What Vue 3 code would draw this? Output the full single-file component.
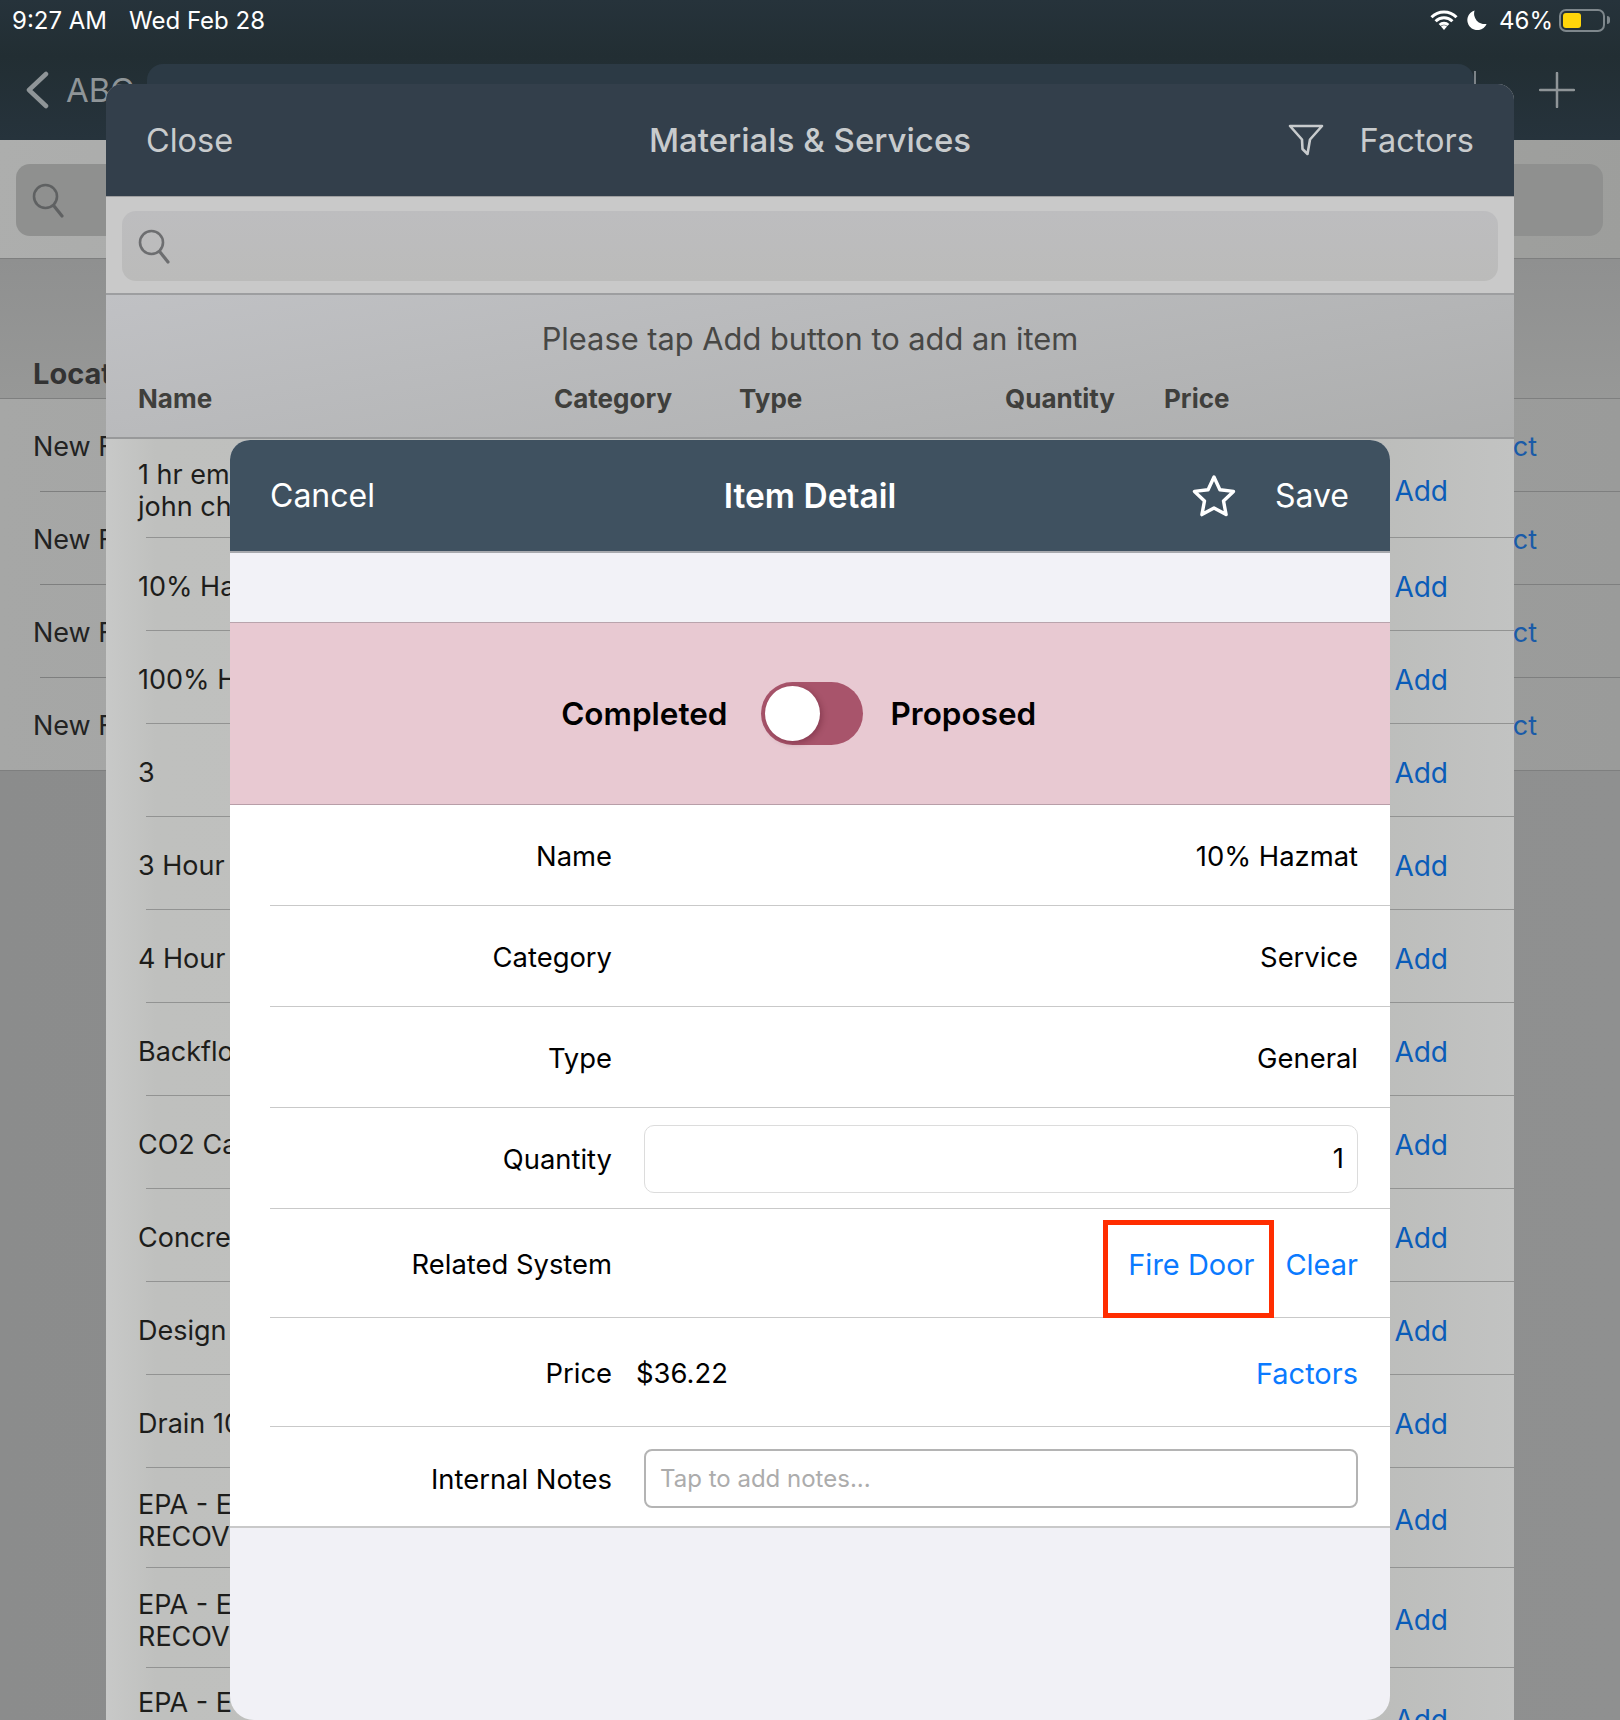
<script setup>
const backRows = [1, 2, 3, 4]
const items = [
  { lines: ['1 hr em', 'john ch'], cls: 'first' },
  { lines: ['10% Ha'] },
  { lines: ['100% H'] },
  { lines: ['3'] },
  { lines: ['3 Hour'] },
  { lines: ['4 Hour'] },
  { lines: ['Backflo'] },
  { lines: ['CO2 Ca'] },
  { lines: ['Concre'] },
  { lines: ['Design'] },
  { lines: ['Drain 10'] },
  { lines: ['EPA - E', 'RECOV'], cls: 'tall' },
  { lines: ['EPA - E', 'RECOV'], cls: 'tall' },
  { lines: ['EPA - E'], cls: 'last' }
]
const infoRows = [
  ['Name', '10% Hazmat'],
  ['Category', 'Service'],
  ['Type', 'General']
]
</script>

<template>
  <div class="screen">
    <!-- page behind the sheets -->
    <div class="base">
      <header class="base-head">
        <div class="status">
          <div class="status-left"><span>9:27 AM</span><span>Wed Feb 28</span></div>
          <div class="status-right">
            <svg class="wifi" viewBox="0 0 28 20" width="28" height="20">
              <path d="M1.5 7.2a17.6 17.6 0 0 1 25 0M5.6 11.2a11.8 11.8 0 0 1 16.8 0M9.7 15a6 6 0 0 1 8.6 0" fill="none" stroke="#fff" stroke-width="3" />
              <path d="M14 20l-3-3.4a4.2 4.2 0 0 1 6 0z" fill="#fff" />
            </svg>
            <svg class="moon" viewBox="0 0 20 20" width="20" height="20">
              <path d="M7.6.5a10 10 0 1 0 12 13.4A10.4 10.4 0 0 1 7.6.5z" fill="#fff" />
            </svg>
            <span class="pct">46%</span>
            <div class="battery"><div class="battery-fill"></div></div>
            <div class="battery-nub"></div>
          </div>
        </div>
        <div class="base-nav">
          <svg class="chev" viewBox="0 0 26 38" width="26" height="38">
            <path d="M22 3L5 19l17 16" fill="none" stroke="#8f9598" stroke-width="4.5" stroke-linecap="round" stroke-linejoin="round" />
          </svg>
          <span class="base-title">ABC</span>
          <svg class="plus" viewBox="0 0 36 36" width="36" height="36">
            <path d="M18 1v34M1 18h34" stroke="#8f9598" stroke-width="2.5" stroke-linecap="round" />
          </svg>
        </div>
      </header>
      <div class="base-search">
        <div class="base-input">
          <svg viewBox="0 0 34 36" width="34" height="36"><circle cx="14.5" cy="14.5" r="11.5" fill="none" stroke="#5f6162" stroke-width="2.6" /><path d="M23 24l8 10" stroke="#5f6162" stroke-width="3.2" stroke-linecap="round" /></svg>
        </div>
      </div>
      <div class="base-section">Locat</div>
      <div class="base-list">
        <div v-for="r in backRows" :key="r" class="base-row"><span class="base-name">New F</span><span class="base-link">Select</span></div>
      </div>
    </div>

    <!-- faint sheet edge -->
    <div class="sheet-back"></div>
    <div class="tick"></div>

    <!-- Materials & Services -->
    <section class="sheet">
      <header class="bar bar-dim">
        <span class="bar-left">Close</span>
        <strong class="bar-title-dim">Materials &amp; Services</strong>
        <div class="bar-right bar-right-dim">
          <svg viewBox="0 0 36 32" width="36" height="32"><path d="M2 2h32L22 15.500 19.500 30 14.500 25 14 15.500z" fill="none" stroke="#c8cbcd" stroke-width="2.6" stroke-linejoin="round" /></svg>
          <span>Factors</span>
        </div>
      </header>
      <div class="sheet-search">
        <div class="sheet-input">
          <svg viewBox="0 0 34 36" width="34" height="36"><circle cx="14.5" cy="14.5" r="11.5" fill="none" stroke="#6d6e70" stroke-width="2.6" /><path d="M23 24l8 10" stroke="#6d6e70" stroke-width="3.2" stroke-linecap="round" /></svg>
        </div>
      </div>
      <div class="table-head">
        <p class="hint">Please tap Add button to add an item</p>
        <div class="cols"><b>Name</b><b>Category</b><b>Type</b><b>Quantity</b><b>Price</b></div>
      </div>
      <div class="table-body">
        <div v-for="(it, i) in items" :key="i" class="item" :class="it.cls">
          <div class="item-name"><div v-for="l in it.lines" :key="l">{{ l }}</div></div>
          <span class="add">Add</span>
        </div>
      </div>
    </section>

    <!-- Item Detail -->
    <section class="modal">
      <header class="bar bar-main">
        <span class="bar-left">Cancel</span>
        <strong class="bar-title-main">Item Detail</strong>
        <div class="bar-right bar-right-main">
          <svg viewBox="0 0 46 44" width="46" height="44"><path d="M23 3l5.900 12.700 13.600 1.700-10 9.500 2.600 13.700L23 33.900l-12.100 6.700 2.600-13.700-10-9.500 13.600-1.700z" fill="none" stroke="#fff" stroke-width="3.4" stroke-linejoin="round" /></svg>
          <span>Save</span>
        </div>
      </header>
      <div class="strip"></div>
      <div class="state">
        <b class="state-a">Completed</b>
        <div class="toggle"><div class="knob"></div></div>
        <b class="state-b">Proposed</b>
      </div>
      <div class="form">
        <div v-for="r in infoRows" :key="r[0]" class="row">
          <label>{{ r[0] }}</label>
          <span class="value">{{ r[1] }}</span>
        </div>
        <div class="row">
          <label>Quantity</label>
          <div class="qty">1</div>
        </div>
        <div class="row row-high">
          <label>Related System</label>
          <div class="links">
            <span class="link-box"><span class="link">Fire Door</span></span>
            <span class="link">Clear</span>
          </div>
        </div>
        <div class="row row-high price">
          <label>Price</label>
          <span class="amount">$36.22</span>
          <span class="link">Factors</span>
        </div>
        <div class="row row-notes">
          <label>Internal Notes</label>
          <div class="notes">Tap to add notes...</div>
        </div>
      </div>
    </section>
  </div>
</template>

<style scoped>
.screen {
  position: relative;
  width: 1620px;
  height: 1720px;
  overflow: hidden;
  font-family: Inter, "Liberation Sans", sans-serif;
  background: linear-gradient(90deg, #8b8c8c, #8f9090);
  color: #000;
}
.base-head {
  height: 140px;
  background: linear-gradient(#26333b, #222e33 40%, #26333c);
  display: flex;
  flex-direction: column;
}
.status {
  height: 40px;
  display: flex;
  justify-content: space-between;
  align-items: center;
  padding: 0 10px 0 12px;
  color: #fff;
  font-size: 24px;
}
.status-left {
  display: flex;
  gap: 22px;
}
.status-right {
  display: flex;
  align-items: center;
  position: relative;
}
.wifi { margin-right: 9px; margin-left: 2px; }
.moon { margin-right: 12px; }
.pct { margin-right: 6px; font-size: 24px; }
.battery {
  width: 46px;
  height: 23px;
  box-sizing: border-box;
  border: 2px solid #7e878c;
  border-radius: 7px;
  padding: 2px;
}
.battery-fill {
  width: 18px;
  height: 100%;
  background: #ffd60a;
  border-radius: 3px;
}
.battery-nub {
  width: 3px;
  height: 8px;
  margin-left: 2px;
  background: #7e878c;
  border-radius: 0 3px 3px 0;
}
.base-nav {
  flex: 1;
  display: flex;
  align-items: center;
  padding: 0 45px 0 24px;
  color: #8f9598;
}
.base-title {
  margin-left: 16px;
  font-size: 33px;
  flex: 1;
}
.base-search {
  height: 119px;
  box-sizing: border-box;
  border-bottom: 1px solid #7e7f7f;
  background: linear-gradient(100deg, #adaead, #9d9e9c);
  padding: 24px 17px 23px 16px;
}
.base-input {
  height: 72px;
  border-radius: 14px;
  background: #8f908f;
  display: flex;
  align-items: center;
  padding-left: 15px;
}
.base-section {
  height: 140px;
  box-sizing: border-box;
  border-bottom: 1px solid #7e7f7f;
  background: linear-gradient(#8f9090, #979897);
  padding: 97px 33px 0;
  font-size: 29px;
  font-weight: 700;
  color: #333;
  line-height: 36px;
}
.base-list {
  background: linear-gradient(90deg, #a6a7a6, #9a9b9a);
  border-bottom: 1px solid #7e7f7f;
  padding-left: 40px;
}
.base-row {
  height: 93px;
  box-sizing: border-box;
  padding: 2px 83px 0 0;
  border-bottom: 1px solid #7e7f7f;
  display: flex;
  justify-content: space-between;
  align-items: center;
  font-size: 27px;
  color: #222;
}
.base-row:last-child { border-bottom: 0; height: 92px; }
.base-name { margin-left: -7px; }
.base-link { color: #1a5ba8; }

.sheet-back {
  position: absolute;
  left: 147px;
  top: 64px;
  width: 1327px;
  height: 60px;
  background: #2c3a45;
  border-radius: 16px 16px 0 0;
}
.tick {
  position: absolute;
  left: 1474px;
  top: 71px;
  width: 2px;
  height: 14px;
  background: #7c8388;
}

.sheet {
  position: absolute;
  left: 106px;
  top: 84px;
  width: 1408px;
  height: 1636px;
  overflow: hidden;
  border-radius: 16px 16px 0 0;
  background: linear-gradient(90deg, #c8c9c8, #bfc0be 50px, #bcbdbb 90%, #c2c3c2);
  display: flex;
  flex-direction: column;
}
.bar {
  flex: none;
  height: 112px;
  display: grid;
  grid-template-columns: 1fr auto 1fr;
  align-items: center;
  padding: 0 40px;
  font-size: 32.5px;
}
.bar-dim {
  background: #333f4b;
  color: #c8cbcd;
}
.bar-main {
  background: #3f5160;
  color: #fff;
  border-bottom: 2px solid #a7a9ad;
  box-sizing: border-box;
  height: 113px;
  font-size: 32px;
}
.bar-title-dim { font-weight: 500; font-size: 33px; }
.bar-title-main { font-weight: 600; font-size: 33.500px; }
.bar-right {
  display: flex;
  justify-content: flex-end;
  align-items: center;
}
.bar-right-dim { gap: 36px; }
.bar-right-main { gap: 38px; margin-right: 1px; }
.sheet-search {
  height: 99px;
  box-sizing: border-box;
  flex: none;
  padding: 14px 16px 13px;
  background: #c9c9c9;
  border-bottom: 2px solid #9d9ea0;
  border-top: 1px solid #9f9fa0;
}
.sheet-input {
  height: 70px;
  border-radius: 14px;
  background: linear-gradient(#bdbdbf, #bbbbba);
  display: flex;
  align-items: center;
  padding-left: 15px;
}
.table-head {
  flex: none;
  height: 144px;
  box-sizing: border-box;
  border-bottom: 2px solid #98999a;
  background: linear-gradient(170deg, #c0c1c4, #adaeae);
  color: #3f3f3c;
}
.hint {
  margin: 0;
  padding-top: 24px;
  text-align: center;
  font-size: 30.800px;
  line-height: 40px;
  color: #474745;
}
.cols {
  display: grid;
  grid-template-columns: 416px 185px 266px 159px 1fr;
  padding: 24px 32px 0;
  font-size: 26px;
  line-height: 32px;
}
.table-body { flex: 1; overflow: hidden; }
.item {
  height: 93px;
  box-sizing: border-box;
  margin-left: 40px;
  border-bottom: 1px solid #929392;
  display: flex;
  justify-content: space-between;
  align-items: center;
  padding: 6px 66px 0 0;
  font-size: 27px;
  line-height: 32px;
  color: #1d1d1b;
}
.item.first { height: 99px; }
.item.tall, .item.last { height: 100px; }
.item.last .item-name { align-self: flex-start; margin-top: 13px; }
.item-name {
  margin-left: -8px;
  white-space: nowrap;
}
.add {
  font-size: 28px;
  margin-bottom: 1px;
  color: #0a5cb8;
}

.modal {
  position: absolute;
  left: 230px;
  top: 440px;
  width: 1160px;
  height: 1280px;
  overflow: hidden;
  border-radius: 20px 20px 24px 24px;
  background: #f1f1f6;
  display: flex;
  flex-direction: column;
}
.strip {
  flex: none;
  height: 69px;
  background: #f2f2f7;
  border-bottom: 1px solid #b9a4ad;
}
.state {
  flex: none;
  height: 182px;
  box-sizing: border-box;
  background: #e8c9d2;
  border-bottom: 1px solid #b89ea8;
  display: grid;
  grid-template-columns: 1fr auto 1fr;
  align-items: center;
  padding-bottom: 1px;
  font-size: 31.500px;
}
.state-a { justify-self: end; font-weight: 600; margin-right: 30px; }
.state-b { justify-self: start; font-weight: 600; margin-left: 28px; }
.toggle {
  width: 102px;
  height: 63px;
  margin-left: 3px;
  box-sizing: border-box;
  border-radius: 32px;
  background: #a8546b;
  padding: 4px;
}
.knob {
  width: 55px;
  height: 55px;
  border-radius: 50%;
  background: #fff;
  box-shadow: 2px 2px 6px rgba(60, 0, 20, 0.3);
}
.form {
  flex: none;
  background: #fff;
  border-bottom: 2px solid #c9c9c9;
  font-size: 27.400px;
}
.row {
  position: relative;
  height: 101px;
  box-sizing: border-box;
  margin-left: 40px;
  padding: 2px 32px 0 0;
  border-bottom: 1.5px solid #c9c9c9;
  display: flex;
  align-items: center;
}
.row label {
  flex: none;
  width: 342px;
  text-align: right;
}
.value { margin-left: auto; }
.qty {
  margin-left: 32px;
  flex: 1;
  height: 68px;
  box-sizing: border-box;
  border: 1.5px solid #dcdcdc;
  border-radius: 10px;
  text-align: right;
  line-height: 65px;
  padding-right: 13px;
}
.row-high { height: 109px; }
.row-notes {
  height: 99px;
  border-bottom: 0;
  padding-top: 4px;
}
.links {
  margin-left: auto;
  display: flex;
  align-items: center;
  gap: 11px;
}
.link { color: #0a7aff; font-size: 29px; }
.link-box {
  height: 98px;
  width: 171px;
  margin-top: 9px;
  box-sizing: border-box;
  border: 5px solid #ff2d00;
  display: flex;
  justify-content: center;
  align-items: center;
  padding: 0 0 8px 5px;
}
.amount { margin-left: 24px; }
.price .link { margin-left: auto; }
.notes {
  margin-left: 32px;
  flex: 1;
  height: 59px;
  box-sizing: border-box;
  border: 2px solid #b4b4b4;
  border-radius: 8px;
  padding-left: 14px;
  line-height: 55px;
  font-size: 24px;
  color: #acacac;
}
</style>

<style>
html, body { margin: 0; background: #8b8c8c; }
</style>
